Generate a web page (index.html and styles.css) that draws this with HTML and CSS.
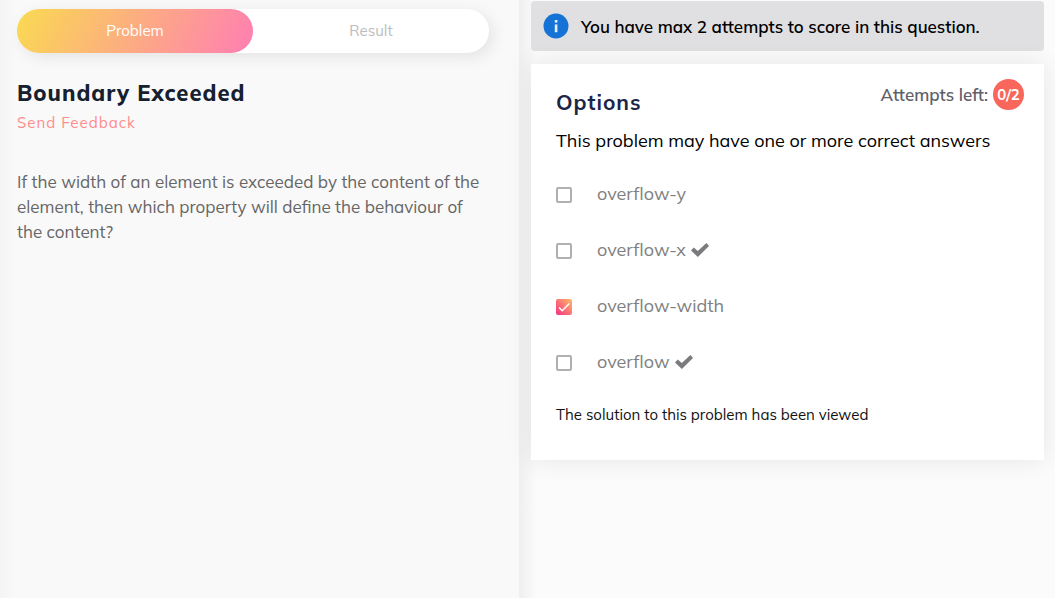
FILE: index.html
```html
<!DOCTYPE html>
<html lang="en">
<head>
<meta charset="utf-8">
<meta name="viewport" content="width=device-width, initial-scale=1">
<title>Boundary Exceeded</title>
<link rel="stylesheet" href="styles.css">
</head>
<body>
<main class="layout">
  <section class="problem">
    <nav class="tabs">
      <button class="tab tab-active" type="button">Problem</button>
      <button class="tab" type="button">Result</button>
    </nav>
    <h1 class="title">Boundary Exceeded</h1>
    <a class="feedback" href="#feedback">Send Feedback</a>
    <p class="statement">If the width of an element is exceeded by the content of the element, then which property will define the behaviour of the content?</p>
  </section>
  <section class="answer">
    <div class="notice">
      <svg class="notice-icon" viewBox="0 0 26 26" aria-hidden="true">
        <circle cx="13" cy="13" r="12.5" fill="#1673d6"/>
        <rect x="11.8" y="7" width="2.6" height="2.6" fill="#e4effb"/>
        <rect x="11.8" y="11.4" width="2.6" height="7.8" fill="#e4effb"/>
      </svg>
      <span>You have max 2 attempts to score in this question.</span>
    </div>
    <form class="card">
      <header class="card-head">
        <h2 class="card-title">Options</h2>
        <p class="attempts">Attempts left: <span class="count">0/2</span></p>
      </header>
      <p class="hint">This problem may have one or more correct answers</p>
      <div class="options">
        <label class="option"><input class="box" type="checkbox"><span>overflow-y</span></label>
        <label class="option"><input class="box" type="checkbox"><span>overflow-x</span>
          <svg class="correct" viewBox="0 0 18 14" aria-hidden="true"><path d="M0 7.6 2.8 4.6 6.8 8.1 15.4 0 18 2.9 6.9 14Z"/></svg></label>
        <label class="option"><input class="box" type="checkbox" checked><span>overflow-width</span></label>
        <label class="option"><input class="box" type="checkbox"><span>overflow</span>
          <svg class="correct" viewBox="0 0 18 14" aria-hidden="true"><path d="M0 7.6 2.8 4.6 6.8 8.1 15.4 0 18 2.9 6.9 14Z"/></svg></label>
      </div>
      <p class="viewed">The solution to this problem has been viewed</p>
    </form>
  </section>
</main>
</body>
</html>
```
FILE: styles.css
```css
* { box-sizing: border-box; }
body {
  margin: 0;
  background: #fbfbfb;
  font-family: Mulish, Muli, "Open Sans", "Noto Sans", sans-serif;
}
h1, h2, p { margin: 0; }
.layout {
  display: grid;
  grid-template-columns: 519fr 536fr;
  min-height: 100vh;
}
.problem {
  padding: 9px 30px 24px 17px;
  background: linear-gradient(90deg, #f4f4f4, #f9f9f9 16px);
}
.tabs {
  display: flex;
  height: 44px;
  border-radius: 22px;
  background: #fff;
  box-shadow: 4px 4px 16px rgba(0, 0, 0, .09);
}
.tab {
  flex: 1;
  border: 0;
  border-radius: 22px;
  background: none;
  color: #bdbdbd;
  font: 15px/20px Mulish, Muli, "Open Sans", "Noto Sans", sans-serif;
}
.tab-active {
  background: linear-gradient(116deg, #fada51, #ff7eb3);
  color: #fff;
}
.title {
  margin-top: 24px;
  color: #16202e;
  font-size: 22px;
  line-height: 32px;
  font-weight: 800;
  letter-spacing: 1px;
}
.feedback {
  display: block;
  margin-top: 4px;
  color: #ff8c8c;
  font-size: 15px;
  line-height: 20px;
  letter-spacing: 1px;
  text-decoration: none;
}
.statement {
  margin-top: 36px;
  color: #666;
  font-size: 17px;
  line-height: 25px;
}
.answer {
  padding: 1px 11px 24px 12px;
  background: linear-gradient(90deg, #efefef, #fbfbfb 18px);
}
.notice {
  display: flex;
  align-items: center;
  gap: 12px;
  height: 50px;
  padding: 0 12px;
  border-radius: 4px;
  background: #e0e0e2;
  color: #000;
  font-size: 17px;
  font-weight: 600;
}
.notice-icon { width: 26px; height: 26px; }
.card {
  margin-top: 13px;
  padding: 15px 20px 35px 25px;
  background: #fff;
  box-shadow: 0 0 24px rgba(0, 0, 0, .09);
}
.card-head {
  display: flex;
  justify-content: space-between;
  align-items: flex-start;
}
.card-title {
  margin-top: 9px;
  color: #1b2547;
  font-size: 21px;
  line-height: 28px;
  font-weight: 700;
  letter-spacing: 1px;
}
.attempts {
  display: flex;
  align-items: center;
  gap: 5px;
  color: #5f6068;
  font-size: 17px;
  font-weight: 600;
}
.count {
  width: 31px;
  height: 31px;
  border-radius: 50%;
  background: #f8665c;
  color: #fff;
  font-size: 15px;
  line-height: 31px;
  font-weight: 700;
  text-align: center;
}
.hint {
  margin-top: 13px;
  color: #000;
  font-size: 18px;
  line-height: 24px;
}
.options {
  display: grid;
  gap: 32px;
  margin-top: 29px;
}
.option {
  display: flex;
  align-items: center;
  color: #808080;
  font-size: 18px;
  line-height: 24px;
}
.box {
  appearance: none;
  width: 16px;
  height: 16px;
  margin: 2px 25px 0 0;
  border: 2px solid #b0b0b0;
  border-radius: 2px;
  background: #fff;
}
.box:checked {
  border: 0;
  background:
    url("data:image/svg+xml,%3Csvg xmlns='http://www.w3.org/2000/svg' viewBox='0 0 16 16'%3E%3Cpath d='M3 8.5 6.2 11.7 13.3 4.5' fill='none' stroke='white' stroke-width='1.5'/%3E%3C/svg%3E"),
    linear-gradient(45deg, #f72f82, #fdbb68);
}
.correct {
  width: 18px;
  height: 14px;
  margin-left: 5px;
  fill: #7b7b7f;
}
.viewed {
  margin-top: 31px;
  color: #111;
  font-size: 15px;
  line-height: 20px;
}
```
